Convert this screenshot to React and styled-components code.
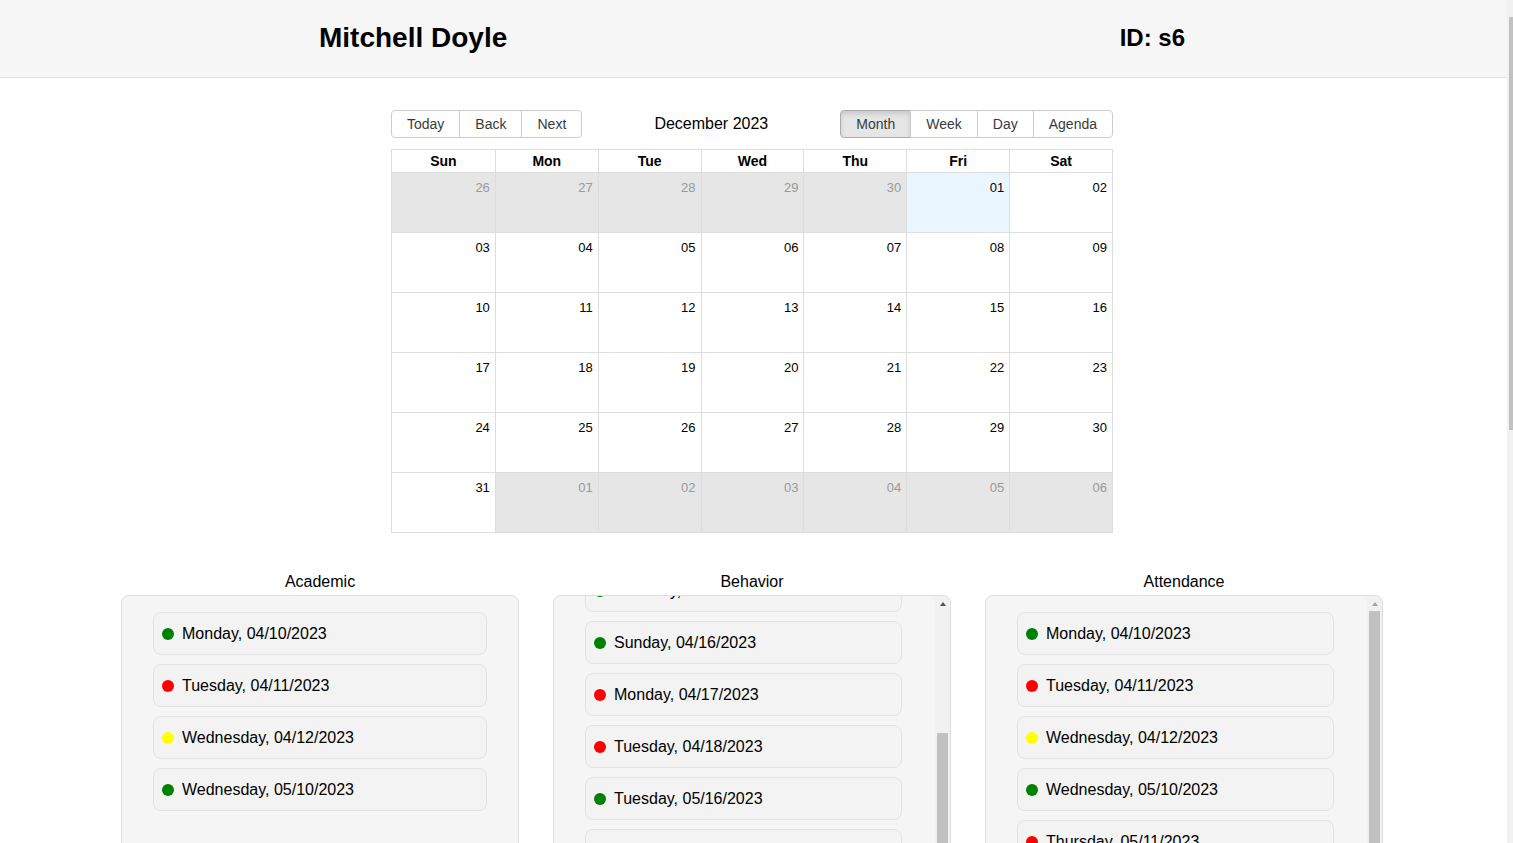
import { useLayoutEffect, useRef } from "react";
import styled, { createGlobalStyle } from "styled-components";

const GlobalStyle = createGlobalStyle`
  body {
    margin: 0;
    background: #fff;
    font-family: "Liberation Sans", Arial, sans-serif;
    color: #000;
  }
`;

const Page = styled.div`
  padding-right: 6px;
`;

// the browser scrollbar strip shown along the right edge of the window
const PageScroll = styled.div`
  position: fixed;
  top: 0;
  right: 0;
  width: 6px;
  height: 100vh;
  padding-top: 17px;
  box-sizing: border-box;
  background: #f1f1f1;
`;

const PageThumb = styled.div`
  height: 413px;
  margin-left: 2px;
  background: #c1c1c1;
`;

const Header = styled.header`
  display: flex;
  justify-content: space-between;
  align-items: center;
  box-sizing: border-box;
  height: 78px;
  padding: 0 322px 2px 319px;
  background: #f6f6f6;
  border-bottom: 1px solid #e2e2e2;
`;

const HeaderText = styled.h1`
  margin: 0;
  font-size: ${(p) => (p.$small ? "24px" : "28px")};
  font-weight: 700;
`;

const Main = styled.main`
  padding: 32px 3px 54px 0;
`;

const Calendar = styled.div`
  width: 722px;
  margin: 0 auto;
  font-size: 14px;
  color: #373a3c;
`;

const Toolbar = styled.div`
  display: flex;
  align-items: center;
  margin-bottom: 11px;
`;

const BtnGroup = styled.div`
  display: flex;
`;

const Btn = styled.button`
  font: inherit;
  font-size: 14px;
  line-height: 16px;
  color: #373a3c;
  padding: 5px 15px;
  background: ${(p) => (p.$active ? "#e6e6e6" : "#fff")};
  border: 1px solid ${(p) => (p.$active ? "#adadad" : "#ccc")};
  box-shadow: ${(p) => (p.$active ? "inset 0 3px 5px rgba(0,0,0,.125)" : "none")};
  border-radius: 0;
  margin: 0;
  & + & {
    margin-left: -1px;
  }
  &:first-child {
    border-radius: 4px 0 0 4px;
  }
  &:last-child {
    border-radius: 0 4px 4px 0;
  }
`;

const Label = styled.span`
  flex: 1;
  text-align: center;
  font-size: 16px;
  color: #000;
`;

const Month = styled.div`
  border: 1px solid #ddd;
`;

const HeadRow = styled.div`
  display: grid;
  grid-template-columns: repeat(7, 1fr);
`;

const HeadCell = styled.div`
  height: 22px;
  line-height: 22px;
  text-align: center;
  font-weight: 700;
  font-size: 14px;
  color: #000;
  border-bottom: 1px solid #ddd;
  & + & {
    border-left: 1px solid #ddd;
  }
`;

const WeekRow = styled.div`
  display: grid;
  grid-template-columns: repeat(7, 1fr);
  height: 59px;
  & + & {
    border-top: 1px solid #ddd;
  }
`;

const DayCell = styled.div`
  background: ${(p) => (p.$off ? "#e6e6e6" : p.$today ? "#eaf6ff" : "#fff")};
  color: ${(p) => (p.$off ? "#999" : "#000")};
  text-align: right;
  padding: 7px 5px 0 0;
  font-size: 13px;
  & + & {
    border-left: 1px solid #ddd;
  }
`;

const Columns = styled.div`
  display: flex;
  justify-content: center;
  gap: 34px;
  margin-top: 38px;
`;

const Column = styled.section`
  width: 398px;
`;

const ColumnTitle = styled.h2`
  margin: 0 0 2px;
  font-size: 16px;
  font-weight: 400;
  line-height: 22px;
  text-align: center;
`;

const PANEL_H = 1000;
const ITEM_STEP = 52;
const LIST_PAD = 16;
const TRACK_W = 15;

const Panel = styled.div`
  box-sizing: border-box;
  display: flex;
  height: ${PANEL_H}px;
  overflow: hidden;
  background: #f5f5f5;
  border: 1px solid #dedede;
  border-radius: 8px;
`;

const List = styled.div`
  flex: 1;
  min-width: 0;
  overflow: hidden;
  padding: ${LIST_PAD}px ${(p) => (p.$scrolls ? "33px" : "31px")} ${LIST_PAD}px 31px;
`;

const Track = styled.div`
  flex: none;
  width: ${TRACK_W}px;
  display: flex;
  flex-direction: column;
  background: #f1f1f1;
`;

const ArrowBtn = styled.div`
  flex: none;
  height: 15px;
  display: flex;
  align-items: center;
  justify-content: center;
  &::after {
    content: "";
    border-left: 3.5px solid transparent;
    border-right: 3.5px solid transparent;
    border-bottom: 4px solid ${(p) => (p.$disabled ? "#a3a3a3" : "#505050")};
  }
`;

const Thumb = styled.div`
  flex: none;
  margin: 0 2px;
  background: #c1c1c1;
`;

const Item = styled.div`
  box-sizing: border-box;
  display: flex;
  align-items: center;
  gap: 8px;
  height: 43px;
  padding: 0 8px;
  margin-bottom: ${ITEM_STEP - 43}px;
  background: #f3f3f3;
  border: 1px solid #e2e2e2;
  border-radius: 8px;
  font-size: 16px;
`;

const Dot = styled.span`
  width: 12px;
  height: 12px;
  border-radius: 50%;
  background: ${(p) => p.$color};
  flex: none;
`;

const COLORS = { g: "#008000", r: "#ff0000", y: "#ffff00" };

const fmt = (iso) => {
  const d = new Date(iso + "T00:00:00Z");
  const wd = d.toLocaleDateString("en-US", { weekday: "long", timeZone: "UTC" });
  const [y, m, day] = iso.split("-");
  return `${wd}, ${m}/${day}/${y}`;
};

const addDays = (iso, n) => {
  const d = new Date(iso + "T00:00:00Z");
  d.setUTCDate(d.getUTCDate() + n);
  return d.toISOString().slice(0, 10);
};

const series = (start, count, pattern) =>
  Array.from({ length: count }, (_, i) => [addDays(start, i), pattern[i % pattern.length]]);

const academic = [
  ["2023-04-10", "g"],
  ["2023-04-11", "r"],
  ["2023-04-12", "y"],
  ["2023-05-10", "g"],
];

const behavior = [
  ["2023-04-12", "g"],
  ["2023-04-13", "y"],
  ["2023-04-14", "g"],
  ["2023-04-15", "g"],
  ["2023-04-16", "g"],
  ["2023-04-17", "r"],
  ["2023-04-18", "r"],
  ...series("2023-05-16", 23, ["g", "r", "g", "y", "g", "r"]),
];

const attendance = [
  ["2023-04-10", "g"],
  ["2023-04-11", "r"],
  ["2023-04-12", "y"],
  ["2023-05-10", "g"],
  ["2023-05-11", "r"],
  ...series("2023-05-12", 18, ["g", "g", "r", "y", "g"]),
];

const weeks = (() => {
  const start = "2023-11-26";
  return Array.from({ length: 6 }, (_, w) =>
    Array.from({ length: 7 }, (_, d) => {
      const iso = addDays(start, w * 7 + d);
      return { iso, day: iso.slice(8), off: iso.slice(5, 7) !== "12", today: iso === "2023-12-01" };
    })
  );
})();

const DAYS = ["Sun", "Mon", "Tue", "Wed", "Thu", "Fri", "Sat"];

const StatusList = ({ title, items, scrollTo = 0 }) => {
  const ref = useRef(null);
  useLayoutEffect(() => {
    if (ref.current) ref.current.scrollTop = scrollTo;
  }, [scrollTo]);

  const viewH = PANEL_H - 2;
  const contentH = LIST_PAD * 2 + items.length * ITEM_STEP - (ITEM_STEP - 43);
  const scrolls = contentH > viewH;
  const trackLen = viewH - 30;

  return (
    <Column>
      <ColumnTitle>{title}</ColumnTitle>
      <Panel>
        <List ref={ref} $scrolls={scrolls}>
          {items.map(([iso, c]) => (
            <Item key={iso}>
              <Dot $color={COLORS[c]} />
              {fmt(iso)}
            </Item>
          ))}
        </List>
        {scrolls && (
          <Track>
            <ArrowBtn $disabled={scrollTo === 0} />
            <Thumb
              style={{
                marginTop: (scrollTo / contentH) * trackLen,
                height: (viewH / contentH) * trackLen,
              }}
            />
          </Track>
        )}
      </Panel>
    </Column>
  );
};

const App = () => {
  return (
    <Page>
      <GlobalStyle />
      <Header>
        <HeaderText>Mitchell Doyle</HeaderText>
        <HeaderText $small>ID: s6</HeaderText>
      </Header>
      <Main>
        <Calendar>
          <Toolbar>
            <BtnGroup>
              <Btn>Today</Btn>
              <Btn>Back</Btn>
              <Btn>Next</Btn>
            </BtnGroup>
            <Label>December 2023</Label>
            <BtnGroup>
              <Btn $active>Month</Btn>
              <Btn>Week</Btn>
              <Btn>Day</Btn>
              <Btn>Agenda</Btn>
            </BtnGroup>
          </Toolbar>
          <Month>
            <HeadRow>
              {DAYS.map((d) => (
                <HeadCell key={d}>{d}</HeadCell>
              ))}
            </HeadRow>
            {weeks.map((wk, i) => (
              <WeekRow key={i}>
                {wk.map((c) => (
                  <DayCell key={c.iso} $off={c.off} $today={c.today}>
                    {c.day}
                  </DayCell>
                ))}
              </WeekRow>
            ))}
          </Month>
        </Calendar>
        <Columns>
          <StatusList title="Academic" items={academic} />
          <StatusList title="Behavior" items={behavior} scrollTo={199} />
          <StatusList title="Attendance" items={attendance} />
        </Columns>
      </Main>
      <PageScroll>
        <PageThumb />
      </PageScroll>
    </Page>
  );
};

export default App;
